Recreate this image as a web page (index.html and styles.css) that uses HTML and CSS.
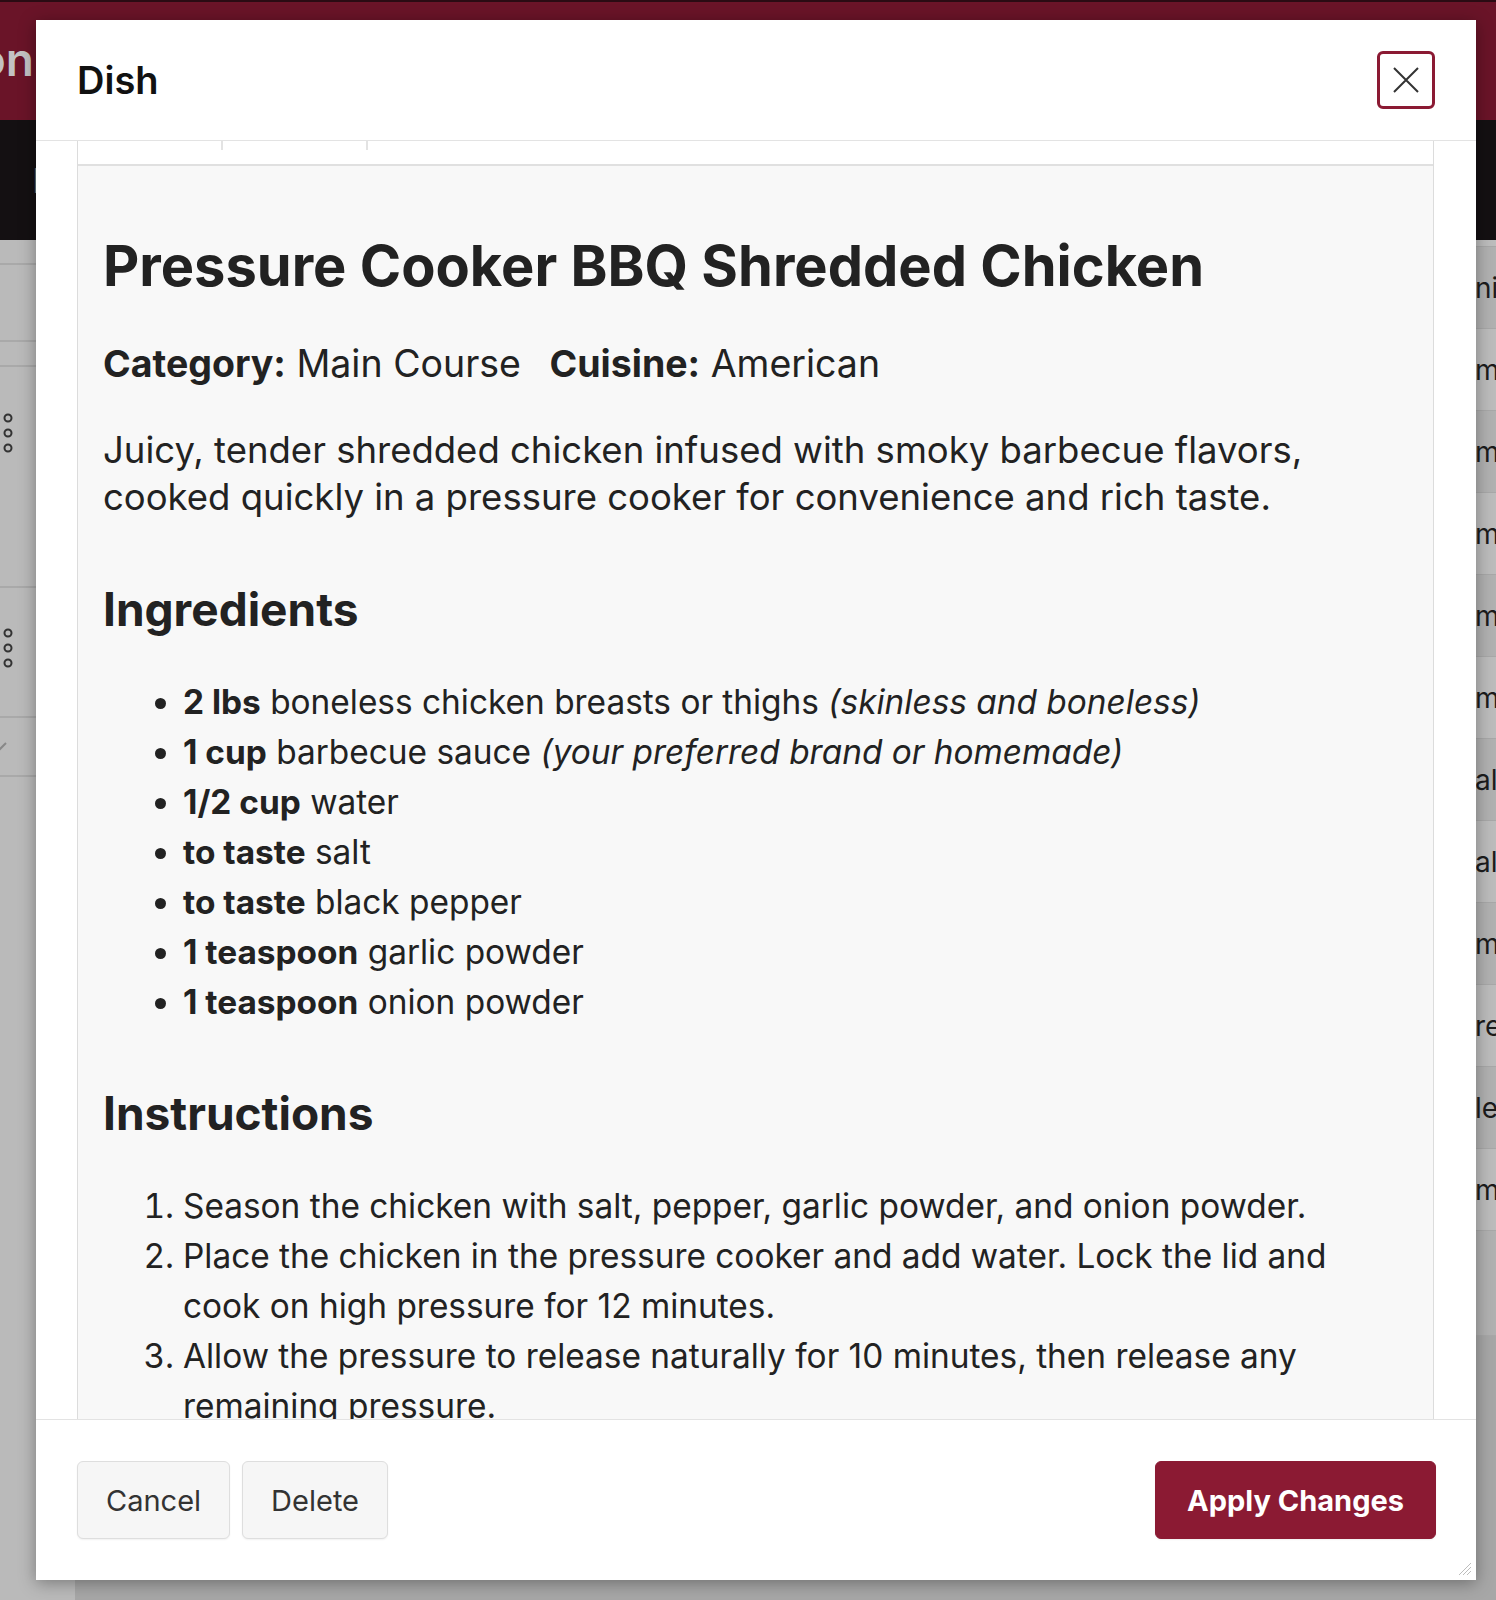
FILE: index.html
```html
<!DOCTYPE html>
<html lang="en">
<head>
<meta charset="utf-8" />
<meta name="viewport" content="width=device-width, initial-scale=1" />
<title>Dish</title>
<link rel="stylesheet" href="styles.css">
</head>
<body>
<div class="app">
	<header class="topbar">
		<div class="brand-wrap"><span class="brand">Recipe Collection</span></div>
	</header>
	<nav class="subbar"><span class="navlink">Dishes</span></nav>
	<div class="main">
		<aside class="side">
			<div class="side-row h25"></div>
			<div class="side-row h77"></div>
			<div class="side-row h25"></div>
			<div class="side-row h221">
				<svg class="dots" width="16" height="40" viewBox="0 0 16 40"><circle cx="8" cy="5" r="3.5"/><circle cx="8" cy="20" r="3.5"/><circle cx="8" cy="35" r="3.5"/></svg>
			</div>
			<div class="side-row h130">
				<svg class="dots" width="16" height="40" viewBox="0 0 16 40"><circle cx="8" cy="5" r="3.5"/><circle cx="8" cy="20" r="3.5"/><circle cx="8" cy="35" r="3.5"/></svg>
			</div>
			<div class="side-row h59">
				<svg class="check" width="12" height="14" viewBox="0 0 12 14"><path d="M0 12 L9 3"/></svg>
			</div>
		</aside>
		<div class="table">
			<div class="row head"></div>
			<div class="row dark"><span class="cell">nin</span></div>
			<div class="row"><span class="cell">main</span></div>
			<div class="row dark"><span class="cell">main</span></div>
			<div class="row"><span class="cell">main</span></div>
			<div class="row dark"><span class="cell">main</span></div>
			<div class="row"><span class="cell">main</span></div>
			<div class="row dark"><span class="cell">al</span></div>
			<div class="row"><span class="cell">al</span></div>
			<div class="row dark"><span class="cell">main</span></div>
			<div class="row"><span class="cell">re</span></div>
			<div class="row dark"><span class="cell">le</span></div>
			<div class="row"><span class="cell">main</span></div>
			<div class="row dark tall"></div>
		</div>
	</div>
</div>

<div class="modal">
	<div class="modal-head">
		<h1>Dish</h1>
		<button class="close" aria-label="Close">
			<svg width="28" height="28" viewBox="0 0 28 28"><path d="M2 2 L26 26 M26 2 L2 26"/></svg>
		</button>
	</div>
	<div class="modal-body">
		<div class="sheet">
			<div class="tabs"><span class="tab"></span><span class="tab"></span></div>
			<article class="recipe">
				<h2 class="title">Pressure Cooker BBQ Shredded Chicken</h2>
				<p class="meta"><span class="meta-item"><b>Category:</b> Main Course</span> <span class="meta-item"><b>Cuisine:</b> American</span></p>
				<p class="desc">Juicy, tender shredded chicken infused with smoky barbecue flavors, cooked quickly in a pressure cooker for convenience and rich taste.</p>
				<h3>Ingredients</h3>
				<ul>
					<li><b>2 lbs</b> boneless chicken breasts or thighs <i>(skinless and boneless)</i></li>
					<li><b>1 cup</b> barbecue sauce <i>(your preferred brand or homemade)</i></li>
					<li><b>1/2 cup</b> water</li>
					<li><b>to taste</b> salt</li>
					<li><b>to taste</b> black pepper</li>
					<li><b>1 teaspoon</b> garlic powder</li>
					<li><b>1 teaspoon</b> onion powder</li>
				</ul>
				<h3>Instructions</h3>
				<ol>
					<li>Season the chicken with salt, pepper, garlic powder, and onion powder.</li>
					<li>Place the chicken in the pressure cooker and add water. Lock the lid and cook on high pressure for 12 minutes.</li>
					<li>Allow the pressure to release naturally for 10 minutes, then release any remaining pressure.</li>
				</ol>
			</article>
		</div>
	</div>
	<div class="modal-foot">
		<button class="btn">Cancel</button>
		<button class="btn">Delete</button>
		<button class="btn btn-primary">Apply Changes</button>
	</div>
	<svg class="grip" width="16" height="16" viewBox="0 0 16 16"><path d="M15 3 L3 15 M15 7 L7 15 M15 11 L11 15"/></svg>
</div>
</body>
</html>
```

FILE: styles.css
```css
* {
	box-sizing: border-box;
}
body {
	margin: 0;
	width: 1496px;
	height: 1600px;
	overflow: hidden;
	position: relative;
	font-family: Inter, "Noto Sans", sans-serif;
	color: #222;
	background: #a7a7a7;
}

/* page behind the dialog (already dimmed) */
.topbar {
	height: 120px;
	background: #6a1428;
	border-top: 2px solid #2a0b13;
	display: flex;
	align-items: center;
}
.brand-wrap {
	width: 34px;
	overflow: hidden;
	display: flex;
	justify-content: flex-end;
}
.brand {
	font-size: 46px;
	font-weight: 600;
	color: #c3c3c3;
	white-space: nowrap;
	padding-bottom: 4px;
}
.subbar {
	height: 120px;
	background: #141012;
	display: flex;
	align-items: center;
	padding-left: 32px;
}
.navlink {
	font-size: 34px;
	color: #777;
}
.main {
	display: flex;
	height: 1360px;
}
.side {
	width: 75px;
	background: #bababa;
}
.side-row {
	border-bottom: 2px solid #a9a9a9;
}
.h25 { height: 25px; }
.h77 { height: 77px; }
.h221 { height: 221px; padding-top: 46px; }
.h130 { height: 130px; padding-top: 40px; }
.h59 { height: 59px; padding-top: 22px; }
.dots {
	display: block;
	fill: none;
	stroke: #333;
	stroke-width: 2;
}
.check {
	display: block;
	margin-left: -3px;
	fill: none;
	stroke: #888;
	stroke-width: 2;
}
.table {
	flex: 1;
}
.row {
	height: 82px;
	display: flex;
	justify-content: flex-end;
	align-items: center;
	background: #bcbcbc;
	border-bottom: 1px solid #a8a8a8;
}
.row.dark {
	background: #b1b1b1;
}
.row.head {
	height: 7px;
	background: #bdbdbd;
}
.row.tall {
	height: 105px;
}
.cell {
	width: 21px;
	overflow: hidden;
	white-space: nowrap;
	font-size: 28px;
	color: #1c1c1c;
}

/* dialog */
.modal {
	position: absolute;
	left: 36px;
	top: 20px;
	width: 1440px;
	height: 1560px;
	background: #fff;
	display: flex;
	flex-direction: column;
	box-shadow: 0 3px 16px rgba(0, 0, 0, 0.35);
}
.modal-head {
	flex: none;
	height: 121px;
	display: flex;
	align-items: center;
	justify-content: space-between;
	padding: 0 41px;
	border-bottom: 1px solid #e3e3e3;
}
.modal-head h1 {
	margin: 0;
	font-size: 38px;
	line-height: 1;
	font-weight: 600;
	color: #111;
}
.close {
	width: 58px;
	height: 58px;
	padding: 0;
	display: flex;
	align-items: center;
	justify-content: center;
	background: #fff;
	border: 3px solid #8b1a33;
	border-radius: 6px;
}
.close svg {
	fill: none;
	stroke: #333;
	stroke-width: 2;
}
.modal-body {
	flex: 1;
	overflow: hidden;
	padding: 0 42px 0 41px;
}
.sheet {
	border-left: 1px solid #dcdcdc;
	border-right: 1px solid #dcdcdc;
}
.tabs {
	display: flex;
	height: 25px;
	border-bottom: 2px solid #e0e0e0;
}
.tab {
	width: 145px;
	height: 9px;
	border-right: 2px solid #e3e3e3;
}
.recipe {
	background: #f8f8f8;
	padding: 66px 26px 40px 25px;
	font-size: 37.5px;
}
.recipe .title {
	margin: 0 0 40px;
	font-size: 56px;
	line-height: 68px;
	font-weight: 700;
}
.recipe p {
	margin: 0 0 40px;
	line-height: 47px;
}
.recipe .desc {
	margin-bottom: 60px;
	font-size: 36.5px;
}
.meta-item {
	margin-right: 18px;
}
.recipe b {
	font-weight: 700;
}
.recipe h3 {
	margin: 0 0 40px;
	font-size: 46px;
	line-height: 56px;
	font-weight: 700;
}
.recipe ul,
.recipe ol {
	margin: 0 0 58px;
	padding-left: 80px;
	font-size: 33.4px;
	line-height: 50px;
}

.modal-foot {
	flex: none;
	height: 161px;
	display: flex;
	align-items: center;
	gap: 12px;
	padding: 0 40px 0 41px;
	border-top: 1px solid #e3e3e3;
}
.btn {
	height: 78px;
	padding: 0 28px;
	font-family: inherit;
	font-size: 29px;
	color: #333;
	background: #f6f6f6;
	border: 1px solid #dedede;
	border-radius: 6px;
	box-shadow: 0 1px 2px rgba(0, 0, 0, 0.06);
}
.btn-primary {
	margin-left: auto;
	padding: 0 31px;
	color: #fff;
	font-weight: 700;
	background: #8b1a33;
	border-color: #8b1a33;
}
.grip {
	position: absolute;
	right: 4px;
	bottom: 4px;
	fill: none;
	stroke: #bdbdbd;
	stroke-width: 1;
}
```
